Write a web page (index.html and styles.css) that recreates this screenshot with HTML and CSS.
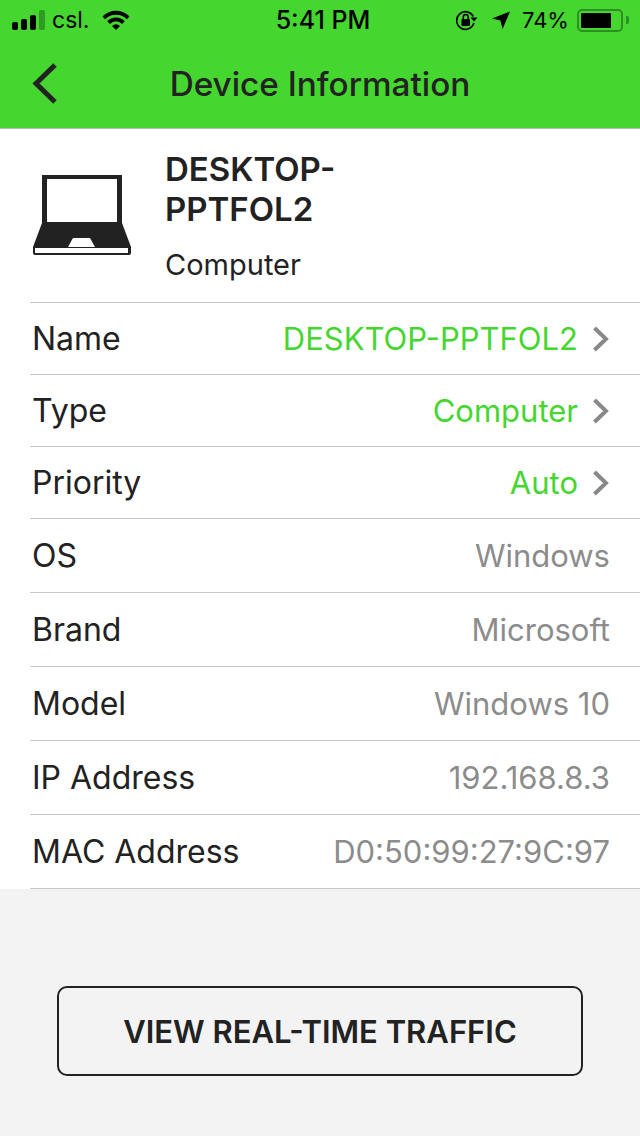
FILE: index.html
```html
<!DOCTYPE html>
<html lang="en">
<head>
  <meta charset="UTF-8">
  <meta name="viewport" content="width=device-width, initial-scale=1.0">
  <title>Device Information</title>
  <link rel="stylesheet" href="styles.css">
</head>
<body>

  <div class="top">
    <div class="status-bar">
      <div class="status-left">
        <div class="signal">
          <span class="bar bar1"></span>
          <span class="bar bar2"></span>
          <span class="bar bar3"></span>
          <span class="bar bar4"></span>
        </div>
        <span class="carrier">csl.</span>
        <svg class="wifi" width="28" height="21" viewBox="0 0 28 21">
          <path d="M0.5 6.5 A19 19 0 0 1 27.5 6.5 L24.8 9.2 A15.3 15.3 0 0 0 3.2 9.2 Z" fill="#000"/>
          <path d="M5.2 11.2 A12.4 12.4 0 0 1 22.8 11.2 L20.1 13.9 A8.6 8.6 0 0 0 7.9 13.9 Z" fill="#000"/>
          <path d="M10 15.9 A5.7 5.7 0 0 1 18 15.9 L14 20 Z" fill="#000"/>
        </svg>
      </div>
      <div class="clock">5:41 PM</div>
      <div class="status-right">
        <svg class="lock" width="22" height="21" viewBox="0 0 22 21">
          <path d="M17.900 13 A8.800 8.800 0 1 1 17.300 6.500" fill="none" stroke="#000" stroke-width="1.700"/>
          <path d="M14.500 7.500 L21.500 7.500 L18 11.500 Z" fill="#000"/>
          <rect x="5.500" y="9" width="8.500" height="7" rx="1" fill="#000"/>
          <path d="M7.300 9 V7 A2.450 2.450 0 0 1 12.200 7 V9" fill="none" stroke="#000" stroke-width="1.500"/>
        </svg>
        <svg class="arrow" width="18" height="18" viewBox="0 0 18 18">
          <path d="M18 0.5 L10.6 18 L8.4 9.6 L0 7.4 Z" fill="#000"/>
        </svg>
        <span class="percent">74%</span>
        <div class="battery">
          <div class="battery-body"><div class="battery-level"></div></div>
          <div class="battery-cap"></div>
        </div>
      </div>
    </div>
    <div class="nav-bar">
      <svg class="back" width="30" height="44" viewBox="0 0 30 44">
        <path d="M25 3 L6 21.5 L25 40" fill="none" stroke="#222" stroke-width="5"/>
      </svg>
      <h1>Device Information</h1>
    </div>
  </div>

  <div class="content">
    <div class="device">
      <svg class="laptop" width="98" height="81" viewBox="0 0 98 81">
        <path d="M9 0 H89 V48 L98 72 V78 A2 2 0 0 1 96 80 H2 A2 2 0 0 1 0 78 V72 L9 48 Z" fill="#222"/>
        <rect x="14" y="4" width="70" height="43" fill="#fff"/>
        <path d="M40 63 H57 L62 72 H35 Z" fill="#fff"/>
        <rect x="2" y="73" width="93" height="5" fill="#fff"/>
      </svg>
      <div class="device-text">
        <div class="device-name">DESKTOP-<br>PPTFOL2</div>
        <div class="device-type">Computer</div>
      </div>
    </div>

    <div class="row short">
      <span class="label">Name</span>
      <span class="value link">DESKTOP-PPTFOL2</span>
      <svg class="chevron" width="18" height="26" viewBox="0 0 18 26"><path d="M2.500 2 L14 13 L2.500 24" fill="none" stroke="#888" stroke-width="4"/></svg>
    </div>
    <div class="row short">
      <span class="label">Type</span>
      <span class="value link">Computer</span>
      <svg class="chevron" width="18" height="26" viewBox="0 0 18 26"><path d="M2.500 2 L14 13 L2.500 24" fill="none" stroke="#888" stroke-width="4"/></svg>
    </div>
    <div class="row short">
      <span class="label">Priority</span>
      <span class="value link">Auto</span>
      <svg class="chevron" width="18" height="26" viewBox="0 0 18 26"><path d="M2.500 2 L14 13 L2.500 24" fill="none" stroke="#888" stroke-width="4"/></svg>
    </div>
    <div class="row">
      <span class="label">OS</span>
      <span class="value">Windows</span>
    </div>
    <div class="row">
      <span class="label">Brand</span>
      <span class="value">Microsoft</span>
    </div>
    <div class="row">
      <span class="label">Model</span>
      <span class="value">Windows 10</span>
    </div>
    <div class="row">
      <span class="label">IP Address</span>
      <span class="value">192.168.8.3</span>
    </div>
    <div class="row">
      <span class="label">MAC Address</span>
      <span class="value">D0:50:99:27:9C:97</span>
    </div>
  </div>

  <div class="footer">
    <button class="traffic-btn">VIEW REAL-TIME TRAFFIC</button>
  </div>

</body>
</html>
```

FILE: styles.css
```css
body {
  font-family: 'Inter', 'Liberation Sans', sans-serif;
  margin: 0;
  padding: 0;
  height: 1136px;
  overflow: hidden;
  background-color: #f3f3f3;
  color: #222;
}

.top {
  background-color: #45d62f;
  height: 128px;
  border-bottom: 1px solid #b8b8b8;
}

.status-bar {
  height: 40px;
  padding: 0 11px 0 12px;
  display: flex;
  align-items: center;
  justify-content: space-between;
  color: #000;
  font-size: 23px;
}

.status-left {
  display: flex;
  align-items: center;
  width: 178px;
}

.signal {
  display: flex;
  align-items: flex-end;
  gap: 3px;
  height: 20px;
}

.bar {
  width: 6px;
  border-radius: 2px;
  background: #000;
}

.bar1 { height: 8px; }
.bar2 { height: 11px; }
.bar3 { height: 15px; }
.bar4 { height: 20px; background: #2f9a24; }

.carrier {
  margin-left: 7px;
  font-weight: 400;
}

.wifi {
  margin-left: 13px;
}

.clock {
  font-size: 25px;
  font-weight: 500;
}

.status-right {
  display: flex;
  align-items: center;
}

.lock {
  margin-right: 14px;
}

.arrow {
  margin-right: 12px;
}

.percent {
  font-size: 22px;
  margin-right: 8px;
}

.battery {
  display: flex;
  align-items: center;
}

.battery-body {
  box-sizing: border-box;
  width: 46px;
  height: 23px;
  padding: 2px;
  border: 2px solid #2f8f25;
  border-radius: 5px;
}

.battery-level {
  width: 30px;
  height: 100%;
  background: #000;
  border-radius: 1px;
}

.battery-cap {
  width: 3px;
  height: 8px;
  margin-left: 3px;
  background: #2f8f25;
  border-radius: 0 2px 2px 0;
}

.nav-bar {
  height: 88px;
  position: relative;
  display: flex;
  align-items: center;
  justify-content: center;
}

.nav-bar h1 {
  margin: 0;
  font-size: 33.300px;
  font-weight: 500;
  color: #222;
}

.back {
  position: absolute;
  left: 30px;
  top: 22px;
}

.content {
  background: #fff;
  height: 760px;
}

.device {
  box-sizing: border-box;
  height: 174px;
  margin-left: 30px;
  display: flex;
  border-bottom: 1px solid #c8c8c8;
}

.laptop {
  margin: 46px 0 0 3px;
}

.device-text {
  margin-left: 34px;
  padding-top: 20px;
}

.device-name {
  font-size: 33px;
  line-height: 40px;
  font-weight: 600;
}

.device-type {
  margin-top: 19px;
  font-size: 29px;
  line-height: 34px;
}

.row {
  box-sizing: border-box;
  height: 74px;
  margin-left: 30px;
  padding: 0 30px 0 3px;
  display: flex;
  align-items: center;
  border-bottom: 1px solid #c8c8c8;
}

.row.short {
  height: 72px;
}

.label {
  flex: 1;
  font-size: 32px;
  margin-left: -1px;
}

.value {
  font-size: 31px;
  color: #8c8c8c;
}

.value.link {
  color: #45d62f;
}

.chevron {
  margin-left: 14px;
}

.footer {
  padding: 97px 57px 0;
}

.traffic-btn {
  width: 526px;
  height: 90px;
  box-sizing: border-box;
  background: transparent;
  border: 2px solid #222;
  border-radius: 10px;
  font-family: inherit;
  font-size: 31px;
  font-weight: 600;
  color: #222;
}
```
